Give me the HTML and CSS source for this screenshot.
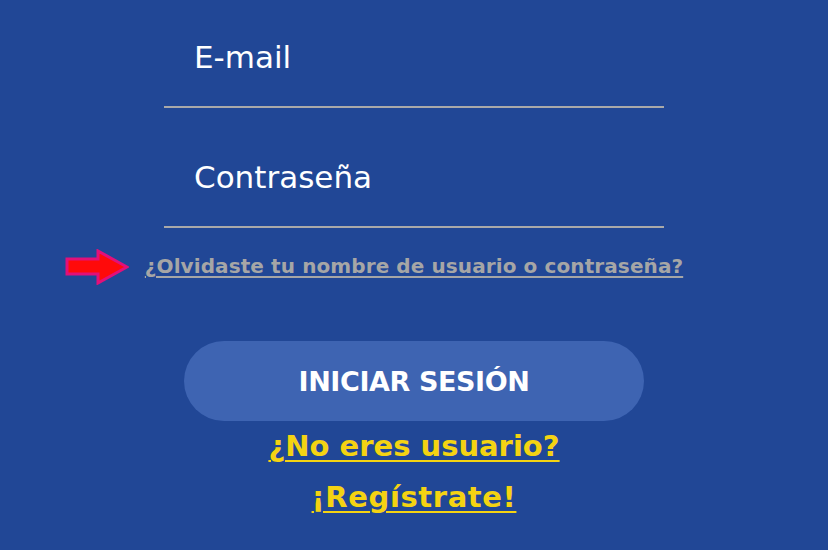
FILE: index.html
```html
<!DOCTYPE html>
<html lang="es">
<head>
    <meta charset="UTF-8">
    <meta name="viewport" content="width=device-width, initial-scale=1.0">
    <title>Iniciar sesión</title>
    <link rel="stylesheet" href="styles.css">
</head>
<body>
    <div class="login">
        <form class="login_form">
            <input class="field" type="email" placeholder="E-mail">
            <input class="field" type="password" placeholder="Contraseña">

            <p class="forgot">
                <svg class="arrow" width="64" height="36" viewBox="0 0 64 36">
                    <polygon points="2,10 33,10 33,2 62,18 33,34 33,25 2,25" fill="#ff0a0a" stroke="#e2107a" stroke-width="3" stroke-linejoin="miter"/>
                </svg>
                <a href="#">¿Olvidaste tu nombre de usuario o contraseña?</a>
            </p>

            <button type="button" class="btn">INICIAR SESIÓN</button>
        </form>

        <p class="register">
            <a href="#">¿No eres usuario?</a><br>
            <a href="#" class="signup">¡Regístrate!</a>
        </p>
    </div>
</body>
</html>
```

FILE: styles.css
```css
body {
    margin: 0;
    background: #214796;
    font-family: "DejaVu Sans", sans-serif;
    height: 550px;
    overflow: hidden;
}

.login {
    width: 500px;
    margin: 0 auto;
}

.login_form {
    display: flex;
    flex-direction: column;
    align-items: center;
}

.field {
    display: block;
    width: 500px;
    height: 120px;
    box-sizing: border-box;
    padding: 19px 0 0 30px;
    margin: 0;
    border: none;
    border-bottom: 2px solid #a9a9a9;
    background: transparent;
    color: #fff;
    font-family: "DejaVu Sans", sans-serif;
    font-size: 31px;
    outline: none;
}

.field:first-child {
    margin-top: -12px;
}

.field::placeholder {
    color: #fff;
    opacity: 1;
}

.forgot {
    position: relative;
    margin: 26px 0 0;
    white-space: nowrap;
}

.forgot a {
    color: #a6a6a6;
    font-weight: bold;
    font-size: 20px;
    letter-spacing: 0.1px;
    text-decoration-thickness: 2px;
    text-underline-offset: 3px;
}

.arrow {
    position: absolute;
    left: -80px;
    top: -5px;
}

.btn {
    width: 460px;
    height: 80px;
    margin-top: 63px;
    border: none;
    border-radius: 40px;
    background: #3e64b2;
    color: #fff;
    font-family: "DejaVu Sans", sans-serif;
    font-weight: bold;
    font-size: 27px;
    letter-spacing: -0.4px;
}

.register {
    margin: 2px 0 0;
    text-align: center;
    line-height: 46px;
}

.register a {
    color: #f4d312;
    font-weight: bold;
    font-size: 29px;
    text-decoration-thickness: 2px;
    text-underline-offset: 4px;
}

.register .signup {
    letter-spacing: 0.6px;
}
```
